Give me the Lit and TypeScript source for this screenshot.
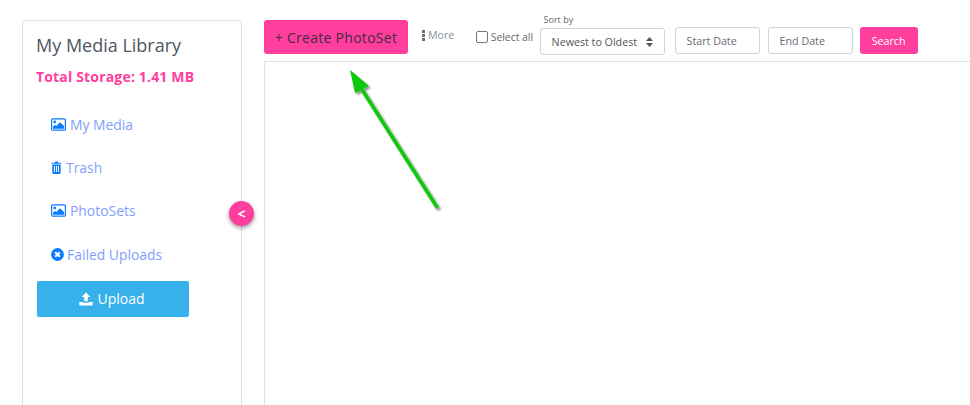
import { LitElement, html, css, svg } from "lit";
import { customElement } from "lit/decorators.js";

const pic = html`<svg class="ic" width="15" height="13" viewBox="0 0 15 13"><rect x=".6" y=".8" width="13.8" height="11.4" rx="1" fill="none" stroke="#0a7bff" stroke-width="1.2"/><circle cx="3.7" cy="3.9" r="1.4" fill="#0a7bff"/><path d="M2 10.8V8.6l2-1.6 1.4 1.1L9 4.2l4 3.9v2.7z" fill="#0a7bff"/></svg>`;
const trash = html`<svg class="ic" width="11" height="13" viewBox="0 0 11 13"><path d="M3.6 1.7 4.3.4h2.4l.7 1.3h3v1.1H.6V1.7z" fill="#0a7bff"/><path fill-rule="evenodd" d="M1.3 3.4h8.4v8.2c0 .8-.5 1.3-1.2 1.3h-6c-.7 0-1.2-.5-1.2-1.3zM3 5v6h1V5zm2 0v6h1V5zm2 0v6h1V5z" fill="#0a7bff"/></svg>`;
const fail = html`<svg class="ic" width="13" height="13" viewBox="0 0 13 13"><circle cx="6.5" cy="6.5" r="6.4" fill="#0a7bff"/><path d="m4.2 4.2 4.6 4.6m0-4.6L4.2 8.8" stroke="#fff" stroke-width="2.1"/></svg>`;

@customElement("app-root")
export class AppRoot extends LitElement {
  static styles = css`
    :host { display: block; position: relative; width: 970px; height: 405px; overflow: hidden; background: #fff; font-family: "Open Sans", sans-serif; color: #555; }
    .page { display: flex; height: 405px; padding: 20px 0 0 22px; box-sizing: border-box; }
    .side { width: 220px; height: 420px; flex: none; box-sizing: border-box; border: 1px solid #dee0e6; border-radius: 4px; padding: 12px 14px 0 13px; }
    .title { font-size: 18px; line-height: 24px; color: #4f5560; }
    .storage { margin-top: 10px; font-size: 14px; line-height: 20px; font-weight: 700; color: #ff3e9d; letter-spacing: .17px; }
    .nav { margin-top: 16px; padding-left: 15px; display: flex; flex-direction: column; }
    .nav a { height: 43px; display: flex; align-items: center; gap: 4px; font-size: 13.9px; color: #7f9ffb; }
    .nav a.f { gap: 3px; height: 44px; }
    .up { margin-top: 5px; margin-left: 1px; width: 152px; height: 36px; padding: 0 2px 1px 0; display: flex; align-items: center; justify-content: center; gap: 4px; background: #36b1ec; color: #fff; border-radius: 2px; font-size: 14px; font-weight: 500; box-sizing: border-box; }
    .main { margin-left: 22px; flex: 1; display: flex; flex-direction: column; min-width: 0; margin-right: -10px; }
    .bar { display: flex; height: 34px; align-items: flex-start; }
    .create { width: 144px; height: 34px; border-radius: 3px; background: #ff3e9d; color: #3f2a45; font-size: 14px; display: flex; align-items: center; justify-content: center; letter-spacing: .28px; }
    .more { margin-left: 14px; margin-top: 8px; display: flex; align-items: center; gap: 3px; font-size: 10.6px; line-height: 14px; color: #8a8f98; }
    .dots { display: flex; flex-direction: column; gap: 1px; width: 3px; }
    .dots i { display: block; width: 3px; height: 3px; background: #666f7b; }
    .sel { margin-left: 21.5px; margin-top: 10px; display: flex; align-items: center; gap: 3px; font-size: 10.4px; line-height: 14px; color: #666; }
    .box { width: 10px; height: 10px; border: 1px solid #767676; border-radius: 2px; background: #fff; }
    .sortwrap { margin-left: 6.5px; margin-top: -7px; display: flex; flex-direction: column; }
    .sortlabel { margin-left: 4px; font-size: 9px; line-height: 13px; color: #666; }
    .field { height: 27px; box-sizing: border-box; border: 1px solid #ced4da; border-radius: 3px; display: flex; align-items: center; font-size: 10.7px; color: #666c75; }
    .sort { width: 125px; margin-top: 2px; padding: 0 11px; justify-content: space-between; color: #555; }
    .date { width: 85px; margin-top: 7px; padding-left: 11px; }
    .d1 { margin-left: 10px; }
    .d2 { margin-left: 8px; }
    .search { margin-left: 7px; margin-top: 7px; width: 58px; height: 27px; border-radius: 3px; background: #ff3e9d; color: #fff; font-size: 10.7px; display: flex; align-items: center; justify-content: center; }
    .panel { margin-top: 7px; flex: 1; border: 1px solid #e2e2e2; border-bottom: none; }
    .toggle { position: absolute; left: 229px; top: 201px; width: 25px; height: 25px; border-radius: 50%; background: #ff3e9d; color: #fff; font-size: 14px; font-weight: 700; display: flex; align-items: center; justify-content: center; box-shadow: 0 2px 4px rgba(0,0,0,.4); }
    .arrow { position: absolute; left: 340px; top: 60px; }
  `;

  render() {
    return html`
      <div class="page">
        <aside class="side">
          <div class="title">My Media Library</div>
          <div class="storage">Total Storage: 1.41 MB</div>
          <nav class="nav">
            <a>${pic}<span>My Media</span></a>
            <a>${trash}<span>Trash</span></a>
            <a>${pic}<span>PhotoSets</span></a>
            <a class="f">${fail}<span>Failed Uploads</span></a>
          </nav>
          <div class="up">
            <svg width="14" height="14" viewBox="0 0 14 14"><path d="M7 .5 11.4 5H8.8v4.2H5.2V5H2.6z" fill="#fff"/><path d="M.3 10h3.9v.8h5.6V10h3.9v3.5H.3z" fill="#fff"/></svg>
            <span>Upload</span>
          </div>
        </aside>
        <main class="main">
          <div class="bar">
            <div class="create">+ Create PhotoSet</div>
            <div class="more"><span class="dots"><i></i><i></i><i></i></span><span>More</span></div>
            <label class="sel"><span class="box"></span><span>Select all</span></label>
            <div class="sortwrap">
              <div class="sortlabel">Sort by</div>
              <div class="field sort"><span>Newest to Oldest</span>
                <svg width="7" height="10" viewBox="0 0 7 10"><path d="M3.5 0 7 4H0zM3.5 10 0 6h7z" fill="#555"/></svg>
              </div>
            </div>
            <div class="field date d1">Start Date</div>
            <div class="field date d2">End Date</div>
            <div class="search">Search</div>
          </div>
          <div class="panel"></div>
        </main>
      </div>
      <div class="toggle">&lt;</div>
      <svg class="arrow" width="110" height="160" viewBox="340 60 110 160">
        <defs><filter id="s" x="-30%" y="-10%" width="160%" height="120%"><feDropShadow dx="2" dy="2" stdDeviation="1.2" flood-color="#000" flood-opacity=".45"/></filter></defs>
        ${svg`<g filter="url(#s)"><path d="M350 70 369 86 363.5 88.5 439 207 436 209 360.5 90.5 355 93z" fill="#0ac80a"/></g>`}
      </svg>
    `;
  }
}
